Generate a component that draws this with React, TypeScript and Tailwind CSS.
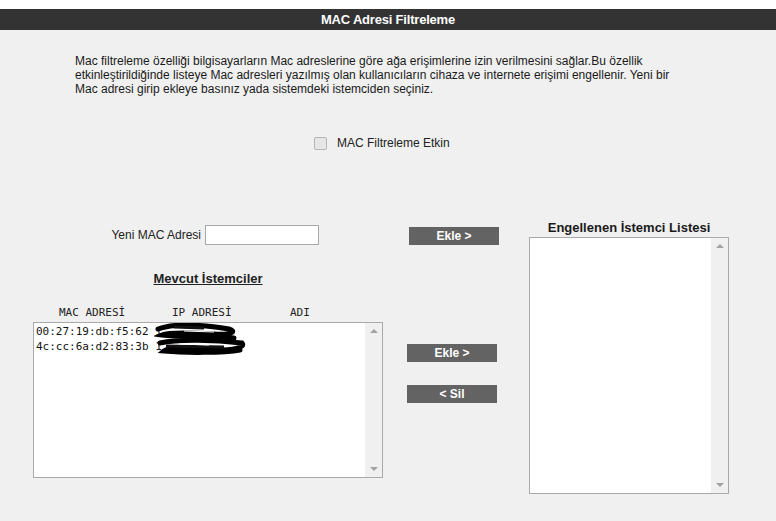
import React from 'react';

const Scrollbar: React.FC = () => (
  <div className="w-[17px] shrink-0 bg-[#f0f0f0] flex flex-col items-center justify-between py-[6px]">
    <div className="w-0 h-0 border-l-[4px] border-r-[4px] border-b-[4px] border-l-transparent border-r-transparent border-b-[#a3a3a3]" />
    <div className="w-0 h-0 border-l-[4px] border-r-[4px] border-t-[4px] border-l-transparent border-r-transparent border-t-[#a3a3a3]" />
  </div>
);

const GrayButton: React.FC<{ label: string; className?: string }> = ({ label, className }) => (
  <button
    className={`w-[90px] h-[18px] bg-[#636363] text-white text-[12px] font-bold leading-[18px] text-center ${className ?? ''}`}
  >
    {label}
  </button>
);

// karalanmış IP adresleri
const Scribble: React.FC = () => (
  <svg width="95" height="32" viewBox="0 0 95 32" className="absolute left-[120px] top-[0px]">
    <path d="M4 6 C20 0, 50 2, 75 6 C82 8, 80 12, 60 11 C40 10, 15 9, 8 12 C25 14, 60 13, 80 15" stroke="#000" strokeWidth="5" fill="none" strokeLinecap="round" />
    <path d="M6 20 C25 16, 60 17, 88 20 C92 24, 80 28, 55 27 C35 26, 15 24, 10 28 C30 30, 70 30, 86 27" stroke="#000" strokeWidth="5" fill="none" strokeLinecap="round" />
    <path d="M20 4 L50 5 M12 23 L70 24" stroke="#111" strokeWidth="3" fill="none" />
    <path d="M30 8 L60 9 M25 21 L55 22" stroke="#fff" strokeWidth="1" fill="none" />
  </svg>
);

const App: React.FC = () => {
  const clients = ['00:27:19:db:f5:62', '4c:cc:6a:d2:83:3b'];

  return (
    <div
      className="w-[776px] h-[521px] bg-[#f0f0f0] text-[#222] overflow-hidden"
      style={{ fontFamily: '"Liberation Sans", Arial, sans-serif' }}
    >
      <div className="h-[9px] bg-white" />
      {/* başlık */}
      <div className="h-[21px] bg-[#333333] flex items-center justify-center">
        <span className="text-white text-[13px] font-bold tracking-[-0.2px]">MAC Adresi Filtreleme</span>
      </div>

      {/* açıklama */}
      <p className="mt-[24px] ml-[75px] text-[12px] leading-[14px] text-[#1a1a1a]">
        Mac filtreleme özelliği bilgisayarların Mac adreslerine göre ağa erişimlerine izin verilmesini sağlar.Bu özellik
        <br />
        etkinleştirildiğinde listeye Mac adresleri yazılmış olan kullanıcıların cihaza ve internete erişimi engellenir. Yeni bir
        <br />
        Mac adresi girip ekleye basınız yada sistemdeki istemciden seçiniz.
      </p>

      <div className="mt-[40px] flex items-center ml-[314px] gap-[10px]">
        <span className="w-[13px] h-[13px] rounded-[2px] border border-[#b5b5b5] bg-[#e6e6e6]" />
        <span className="text-[12px] leading-[14px]">MAC Filtreleme Etkin</span>
      </div>

      <div className="mt-[70px] flex items-start">
        {/* sol sütun */}
        <div className="ml-[33px] w-[350px] flex flex-col">
          <div className="mt-[5px] ml-[75px] flex items-center gap-[4px]">
            <span className="text-[12px] w-[93px] text-right">Yeni MAC Adresi</span>
            <input className="w-[114px] h-[20px] bg-white border border-[#a9a9a9] outline-none" />
          </div>
          <div className="mt-[26px] text-center text-[13px] font-bold underline leading-[16px]">Mevcut İstemciler</div>
          <div
            className="mt-[19px] flex text-[11px] leading-[13px]"
            style={{ fontFamily: '"DejaVu Sans Mono", monospace' }}
          >
            <span className="ml-[26px] w-[113px]">MAC ADRESİ</span>
            <span className="w-[118px]">IP ADRESİ</span>
            <span>ADI</span>
          </div>
          <div className="mt-[3px] h-[156px] bg-white border border-[#a9a9a9] flex">
            <div
              className="relative flex-1 pt-[1px] pl-[2px] text-[11px] leading-[15px] text-[#111]"
              style={{ fontFamily: '"DejaVu Sans Mono", monospace' }}
            >
              {clients.map((c) => (
                <div key={c}>{c} 1</div>
              ))}
              <Scribble />
            </div>
            <Scrollbar />
          </div>
        </div>

        {/* butonlar */}
        <div className="ml-[24px] w-[92px] flex flex-col">
          <GrayButton label="Ekle >" className="mt-[7px] ml-[2px]" />
          <GrayButton label="Ekle >" className="mt-[99px]" />
          <GrayButton label="< Sil" className="mt-[23px]" />
        </div>

        {/* sağ sütun */}
        <div className="ml-[30px] w-[200px] flex flex-col">
          <div className="text-center text-[13px] font-bold leading-[16px] text-[#1a1a1a]">Engellenen İstemci Listesi</div>
          <div className="mt-[1px] h-[257px] bg-white border border-[#a9a9a9] flex">
            <div className="flex-1" />
            <Scrollbar />
          </div>
        </div>
      </div>
    </div>
  );
};

export default App;
